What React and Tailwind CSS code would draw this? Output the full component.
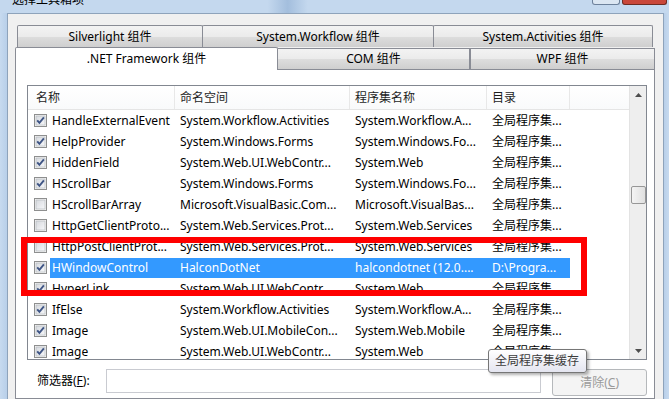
// 选择工具箱项 对话框
const rows = [
  { on: true, name: "HandleExternalEvent", ns: "System.Workflow.Activities", asm: "System.Workflow.A...", dir: "全局程序集..." },
  { on: true, name: "HelpProvider", ns: "System.Windows.Forms", asm: "System.Windows.Fo...", dir: "全局程序集..." },
  { on: true, name: "HiddenField", ns: "System.Web.UI.WebContr...", asm: "System.Web", dir: "全局程序集..." },
  { on: true, name: "HScrollBar", ns: "System.Windows.Forms", asm: "System.Windows.Fo...", dir: "全局程序集..." },
  { on: false, name: "HScrollBarArray", ns: "Microsoft.VisualBasic.Com...", asm: "Microsoft.VisualBas...", dir: "全局程序集..." },
  { on: false, name: "HttpGetClientProto...", ns: "System.Web.Services.Prot...", asm: "System.Web.Services", dir: "全局程序集..." },
  { on: false, name: "HttpPostClientProt...", ns: "System.Web.Services.Prot...", asm: "System.Web.Services", dir: "全局程序集..." },
  { on: true, name: "HWindowControl", ns: "HalconDotNet", asm: "halcondotnet (12.0....", dir: "D:\\Progra...", sel: true },
  { on: true, name: "HyperLink", ns: "System.Web.UI.WebContr...", asm: "System.Web", dir: "全局程序集..." },
  { on: true, name: "IfElse", ns: "System.Workflow.Activities", asm: "System.Workflow.A...", dir: "全局程序集..." },
  { on: true, name: "Image", ns: "System.Web.UI.MobileCon...", asm: "System.Web.Mobile", dir: "全局程序集..." },
  { on: true, name: "Image", ns: "System.Web.UI.WebContr...", asm: "System.Web", dir: "全局程序集..." },
];

const tabBg = "bg-[linear-gradient(180deg,#f3f3f3_0%,#ebebeb_50%,#dddddd_51%,#cfcfcf_100%)]";

function Check({ on }) {
  return (
    <svg width="13" height="13" viewBox="0 0 13 13" className="shrink-0">
      <defs>
        <linearGradient id="cbg" x1="0" y1="0" x2="1" y2="1">
          <stop offset="0" stopColor="#d6d9de" />
          <stop offset="1" stopColor="#f7f8fa" />
        </linearGradient>
      </defs>
      <rect x="0.5" y="0.5" width="12" height="12" fill="#f4f4f4" stroke="#8e8f8f" />
      <rect x="2" y="2" width="9" height="9" fill="url(#cbg)" stroke="#b0b4ba" strokeWidth="0.6" />
      {on && <path d="M3.2 6.4 L5.4 8.9 L9.9 3.4" fill="none" stroke="#3f5585" strokeWidth="1.9" />}
    </svg>
  );
}

function Arrow({ up }) {
  return (
    <svg width="7" height="4" viewBox="0 0 7 4">
      <path d={up ? "M0 4 L3.5 0 L7 4 Z" : "M0 0 L3.5 4 L7 0 Z"} fill="#4d4d4d" />
    </svg>
  );
}

export default function App() {
  return (
    <div className="relative w-[669px] h-[399px] overflow-hidden bg-[#bfd4ec] text-[12px] text-black font-['Noto_Sans','Noto_Sans_CJK_SC',sans-serif]">
      {/* 标题栏 */}
      <div className="flex h-[13px] overflow-hidden bg-[linear-gradient(90deg,#c4d8ee_0%,#c4d8ee_40%,#a3bedd_43%,#c4d8ee_46%,#c4d8ee_100%)]">
        <span className="ml-[12px] mt-[-7px] leading-[12px] font-['Noto_Sans_CJK_SC',sans-serif]">选择工具箱项</span>
        <div className="ml-auto mr-[2px] flex gap-[2px]">
          <div className="w-[28px] h-[5px] rounded-b-[3px] border border-t-0 border-[#6d819b] bg-[#dbe6f2]" />
          <div className="w-[45px] h-[5px] rounded-b-[3px] border border-t-0 border-[#6e2b22] bg-[#c9473a]" />
        </div>
      </div>

      <div className="flex h-[386px]">
        <div className="w-[7px] bg-[linear-gradient(90deg,#c7daef,#b8cfe9)]" />
        <div className="w-[657px] border-l border-t border-r border-[#8ea3bb] bg-[#f0f0f0] pt-[11px] pl-[7px] pr-[8px] flex flex-col">
          {/* 选项卡 第一行 */}
          <div className="flex h-[22px] pl-[2px]">
            <div className={`w-[186px] h-full flex items-center justify-center border border-b-0 border-[#898c95] rounded-t-[2px] ${tabBg}`}>
              Silverlight 组件
            </div>
            <div className={`w-[232px] -ml-px h-full flex items-center justify-center border border-b-0 border-[#898c95] rounded-t-[2px] ${tabBg}`}>
              System.Workflow 组件
            </div>
            <div className={`w-[220px] -ml-px h-full flex items-center justify-center border border-b-0 border-[#898c95] rounded-t-[2px] ${tabBg}`}>
              System.Activities 组件
            </div>
          </div>
          {/* 选项卡 第二行 */}
          <div className="flex items-end h-[23px]">
            <div className="w-[263px] h-[23px] flex items-center justify-center border border-b-0 border-[#898c95] rounded-t-[2px] bg-white">
              .NET Framework 组件
            </div>
            <div className={`w-[192px] h-[22px] flex items-center justify-center border border-l-0 border-[#898c95] ${tabBg}`}>
              COM 组件
            </div>
            <div className={`w-[185px] h-[22px] flex items-center justify-center border border-[#898c95] ${tabBg}`}>
              WPF 组件
            </div>
          </div>

          {/* 选项卡页面 */}
          <div className="flex-1 border-l border-r border-b border-[#898c95] bg-white pt-[15px] pl-[11px] pr-[7px]">
            <div className="h-[275px] border border-[#828790] flex">
              <div className="flex-1 flex flex-col overflow-hidden">
                {/* 列标题 */}
                <div className="flex h-[24px] shrink-0 items-center border-b border-[#e5e5e5] text-[#1e1e1e] bg-[linear-gradient(180deg,#ffffff,#f9fafb)]">
                  <div className="w-[147px] h-full flex items-center pl-[8px] border-r border-[#e8e8e8]">名称</div>
                  <div className="w-[175px] h-full flex items-center pl-[5px] border-r border-[#e8e8e8]">命名空间</div>
                  <div className="w-[137px] h-full flex items-center pl-[5px] border-r border-[#e8e8e8]">程序集名称</div>
                  <div className="w-[83px] h-full flex items-center pl-[5px] border-r border-[#e8e8e8]">目录</div>
                  <div className="flex-1" />
                </div>
                {rows.map((r, i) => (
                  <div key={i} className="flex h-[21px] shrink-0 items-center whitespace-nowrap">
                    <div className="w-[22px] flex items-center pl-[6px]">
                      <Check on={r.on} />
                    </div>
                    <div className={`flex h-[20px] items-center w-[520px] ${r.sel ? "bg-[#3399ff] text-white" : ""}`}>
                      <div className="w-[125px] pl-[2px] overflow-hidden">{r.name}</div>
                      <div className="w-[175px] pl-[5px] overflow-hidden">{r.ns}</div>
                      <div className="w-[137px] pl-[5px] overflow-hidden">{r.asm}</div>
                      <div className="w-[83px] pl-[5px] overflow-hidden">{r.dir}</div>
                    </div>
                  </div>
                ))}
              </div>
              {/* 滚动条 */}
              <div className="w-[17px] flex flex-col bg-[#eeeeee] border-l border-[#e3e3e3]">
                <div className="h-[17px] flex items-center justify-center">
                  <Arrow up />
                </div>
                <div className="h-[83px]" />
                <div className="mx-auto w-[15px] h-[18px] rounded-[2px] border border-[#979797] bg-[linear-gradient(90deg,#f4f4f4,#e0e0e0)]" />
                <div className="flex-1" />
                <div className="h-[17px] flex items-center justify-center">
                  <Arrow />
                </div>
              </div>
            </div>

            {/* 筛选器 */}
            <div className="flex items-start mt-[9px]">
              <div className="w-[69px] h-[24px] ml-[10px] flex items-center">
                筛选器(<span className="underline">F</span>):
              </div>
              <div className="w-[437px] h-[24px] border border-[#c9cbd1] bg-white" />
              <div className="ml-[11px] w-[95px] h-[27px] flex items-center justify-center rounded-[3px] border border-[#b5b8bb] bg-[#f4f4f4] text-[#9a9a9a]">
                清除(<span className="underline">C</span>)
              </div>
            </div>
          </div>
        </div>
        <div className="w-[5px] bg-[linear-gradient(90deg,#b8cfe9,#c7daef)]" />
      </div>

      {/* 红色标注框 */}
      <div className="absolute left-[21px] top-[237px] w-[566px] h-[59px] border-[6px] border-[#ff0000]" />

      {/* 工具提示 */}
      <div className="absolute left-[488px] top-[349px] w-[99px] h-[24px] flex items-center pl-[6px] rounded-[3px] border border-[#767676] bg-[linear-gradient(180deg,#ffffff,#e4e5f0)] shadow-[2px_2px_3px_rgba(0,0,0,0.3)] text-[#3c3c3c]">
        全局程序集缓存
      </div>
    </div>
  );
}
